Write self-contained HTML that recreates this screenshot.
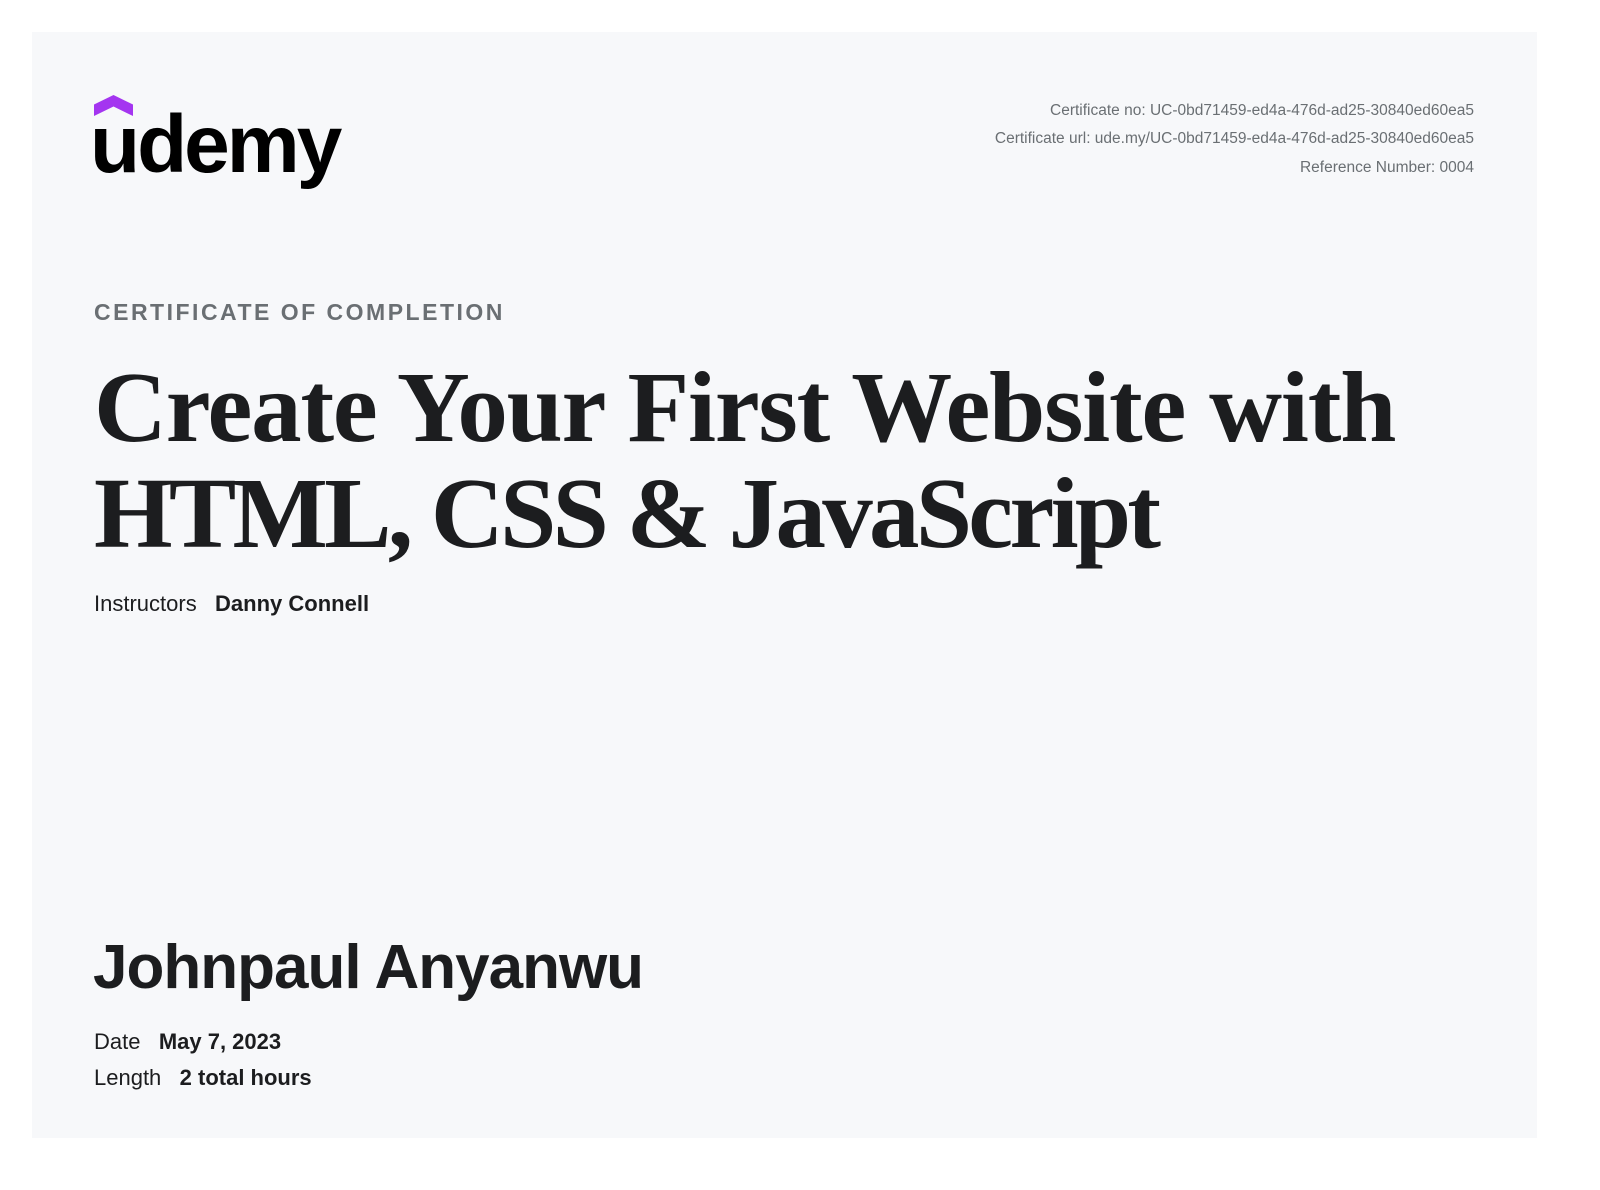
<!DOCTYPE html>
<html><head><meta charset="utf-8"><style>
html,body{margin:0;padding:0;background:#fff;}
body{width:1600px;height:1190px;position:relative;overflow:hidden;font-family:"Liberation Sans",sans-serif;color:#1c1d1f;}
.card{position:absolute;left:32px;top:32px;width:1505px;height:1106px;background:#f7f8fa;}
.a{position:absolute;white-space:nowrap;}
.meta{right:126px;font-size:15.5px;color:#6a6f73;text-align:right;line-height:18px;}
</style></head><body>
<div class="card"></div>
<svg class="a" style="left:94px;top:95px" width="40" height="22" viewBox="0 0 40 22"><path d="M0 21 L0 9.5 L19.5 0 L39 9.5 L39 21 L19.5 11.5 Z" fill="#a435f0"/></svg>
<div class="a" style="left:90px;top:95px;font-size:82px;font-weight:bold;letter-spacing:-3px;line-height:100px;color:#000">udemy</div>
<div class="a meta" style="top:102px">Certificate no: UC-0bd71459-ed4a-476d-ad25-30840ed60ea5</div>
<div class="a meta" style="top:130px">Certificate url: ude.my/UC-0bd71459-ed4a-476d-ad25-30840ed60ea5</div>
<div class="a meta" style="top:159px">Reference Number: 0004</div>
<div class="a" style="left:94px;top:298px;font-size:23px;font-weight:bold;letter-spacing:2.5px;color:#6a6f73;line-height:28px">CERTIFICATE OF COMPLETION</div>
<div class="a" style="left:94px;top:354px;font-family:'Liberation Serif',serif;font-weight:bold;font-size:101px;line-height:106px;letter-spacing:-1.2px">Create Your First Website with<br><span style="letter-spacing:-3.7px">HTML, CSS &amp; JavaScript</span></div>
<div class="a" style="left:94px;top:590px;font-size:22px;line-height:28px">Instructors&nbsp;&nbsp;&nbsp;<b>Danny Connell</b></div>
<div class="a" style="left:93px;top:930px;font-size:62px;font-weight:bold;line-height:76px;letter-spacing:-1px">Johnpaul Anyanwu</div>
<div class="a" style="left:94px;top:1028px;font-size:22px;line-height:28px">Date&nbsp;&nbsp;&nbsp;<b>May 7, 2023</b></div>
<div class="a" style="left:94px;top:1064px;font-size:22px;line-height:28px">Length&nbsp;&nbsp;&nbsp;<b>2 total hours</b></div>
</body></html>
